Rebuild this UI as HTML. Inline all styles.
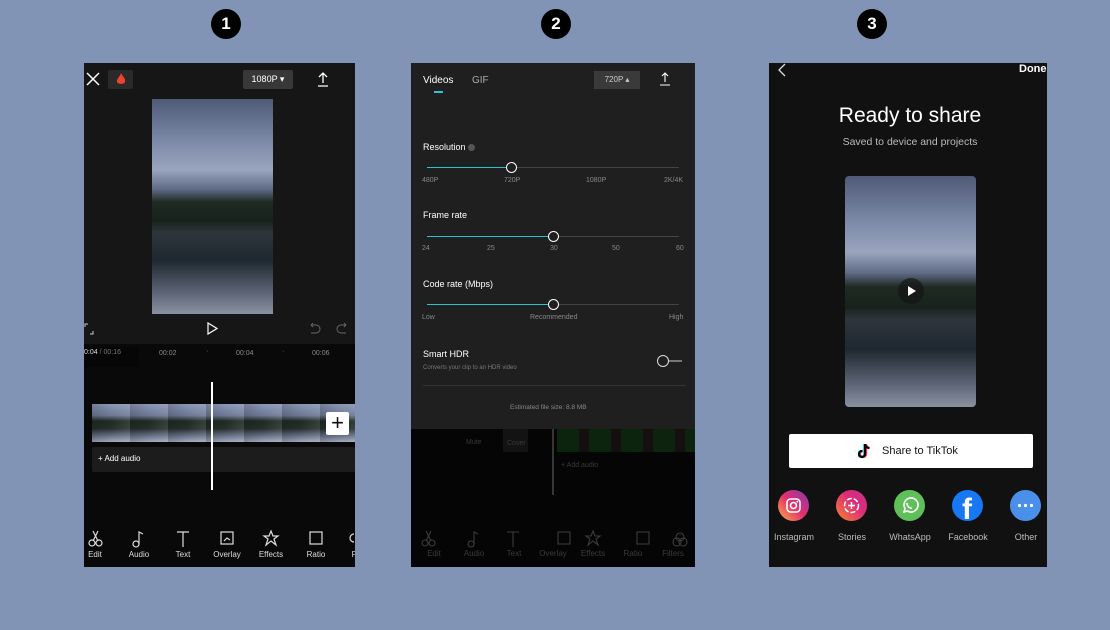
<!DOCTYPE html>
<html><head><meta charset="utf-8"><style>
*{margin:0;padding:0;box-sizing:border-box}
body{width:1110px;height:630px;background:#8194b6;position:relative;overflow:hidden;font-family:"Liberation Sans",sans-serif}
.a{position:absolute}
.num{position:absolute;width:30px;height:30px;border-radius:50%;background:#000;color:#fff;font-weight:bold;font-size:17px;text-align:center;line-height:30px;top:9px}
.photo{background:linear-gradient(180deg,#4e5a76 0%,#7d8aa8 20%,#9aa4bd 33%,#5f6a85 42%,#1e2a22 48%,#18221d 57%,#2e353d 62%,#1e2830 75%,#5d6475 90%,#8a92a2 100%)}
.t{position:absolute;color:#fff;white-space:nowrap}
.sl{position:absolute;height:1px;background:#444}
.sl i{position:absolute;left:0;top:0;height:1px;background:#2bc3d3}
.knob{position:absolute;width:11px;height:11px;border-radius:50%;border:1.5px solid #fff;background:#1f1f1f;top:-5px}
.lab{position:absolute;font-size:7px;color:#888}
.tb{position:absolute;font-size:8px;color:#ddd;text-align:center;width:40px}
.soc{position:absolute;width:31px;height:31px;border-radius:50%;top:490px}
.sl2{position:absolute;top:532px;font-size:9px;color:#bbb;width:60px;text-align:center}
</style></head><body>
<div class="num" style="left:211px">1</div>
<div class="num" style="left:541px">2</div>
<div class="num" style="left:857px">3</div>

<div class="a" style="left:84px;top:63px;width:271px;height:504px;background:#161616;overflow:hidden">
 <div class="a" style="left:0;top:281px;width:271px;height:223px;background:#090909"></div>
 <svg class="a" style="left:2px;top:9px" width="14" height="14"><path d="M1 1L13 13M13 1L1 13" stroke="#fff" stroke-width="1.5"/></svg>
 <div class="a" style="left:24px;top:7px;width:25px;height:19px;background:#2a2a2a;border-radius:2px"></div>
 <svg class="a" style="left:31px;top:9px" width="12" height="14"><path d="M6 1C7 4 11 6 10 10C9.5 12.5 2.5 12.5 2 10C1.5 7 4 6 6 1Z" fill="#e8452c"/></svg>
 <div class="a" style="left:159px;top:7px;width:50px;height:19px;background:#383838;border-radius:2px;color:#fff;font-size:9px;line-height:19px;text-align:center">1080P ▾</div>
 <svg class="a" style="left:232px;top:8px" width="14" height="16"><path d="M7 12V2M3 6L7 2L11 6M2 15H12" stroke="#fff" stroke-width="1.3" fill="none"/></svg>
 <div class="a photo" style="left:68px;top:36px;width:121px;height:215px"></div>
 <svg class="a" style="left:0;top:260px" width="10" height="12"><path d="M1 4V1H4M9 8V11H6" stroke="#ccc" fill="none"/></svg>
 <svg class="a" style="left:123px;top:259px" width="11" height="13"><path d="M1 1L10 6.5L1 12Z" stroke="#fff" fill="none" stroke-width="1.2"/></svg>
 <svg class="a" style="left:225px;top:260px" width="40" height="12"><path d="M2 2H7A4 4 0 0 1 7 10H2M2 2L4 0M2 2L4 4" stroke="#666" fill="none"/><path d="M37 2H32A4 4 0 0 0 32 10H37M37 2L35 0M37 2L35 4" stroke="#666" fill="none"/></svg>
 <div class="a" style="left:0;top:284px;width:55px;height:20px;background:#060606"></div>
 <div class="t" style="left:0;top:286px;font-size:7px;color:#ddd">0:04 <span style="color:#777">/ 00:16</span></div>
 <div class="t" style="left:75px;top:287px;font-size:7px;color:#888">00:02</div>
 <div class="t" style="left:122px;top:285px;font-size:7px;color:#888">·</div>
 <div class="t" style="left:152px;top:287px;font-size:7px;color:#888">00:04</div>
 <div class="t" style="left:198px;top:285px;font-size:7px;color:#888">·</div>
 <div class="t" style="left:228px;top:287px;font-size:7px;color:#888">00:06</div>
 <div class="a" style="left:8px;top:341px;width:263px;height:38px;background:linear-gradient(180deg,#8a96b4 0%,#6d7894 30%,#1e2a22 45%,#26302a 65%,#5a6478 80%,#a0a8bc 100%)"></div>
 <div class="a" style="left:8px;top:341px;width:263px;height:38px;background:repeating-linear-gradient(90deg,rgba(0,0,0,.15) 0,rgba(0,0,0,0) 19px,rgba(255,255,255,.1) 38px)"></div>
 <div class="a" style="left:242px;top:349px;width:23px;height:23px;background:#fff;border-radius:2px;font-size:22px;line-height:22px;text-align:center;color:#111">+</div>
 <div class="a" style="left:8px;top:384px;width:263px;height:25px;background:#1c1c1c;border-radius:2px"></div>
 <div class="t" style="left:14px;top:391px;font-size:8px">+ Add audio</div>
 <div class="a" style="left:127px;top:319px;width:2px;height:108px;background:#fff"></div>
 <svg class="a" style="left:0;top:466px" width="271" height="20" fill="none" stroke="#ddd" stroke-width="1.2">
  <circle cx="8" cy="14" r="3"/><circle cx="15" cy="14" r="3"/><path d="M9 12L14 2M14 12L9 2"/>
  <circle cx="52" cy="15" r="3"/><path d="M55 15V3L59 5"/>
  <path d="M93 3H105M99 3V18"/>
  <rect x="137" y="3" width="12" height="12"/><path d="M140 12L143 9L146 11"/>
  <path d="M187 2L189 7L194 7L190 10L192 16L187 12L182 16L184 10L180 7L185 7Z"/>
  <rect x="226" y="3" width="12" height="12"/>
  <path d="M270 5A4 4 0 0 0 270 13"/>
 </svg>
 <div class="tb" style="left:-9px;top:487px">Edit</div>
 <div class="tb" style="left:35px;top:487px">Audio</div>
 <div class="tb" style="left:79px;top:487px">Text</div>
 <div class="tb" style="left:123px;top:487px">Overlay</div>
 <div class="tb" style="left:167px;top:487px">Effects</div>
 <div class="tb" style="left:212px;top:487px">Ratio</div>
 <div class="tb" style="left:251px;top:487px">Fi</div>
</div>

<div class="a" style="left:411px;top:63px;width:284px;height:504px;background:#050505;overflow:hidden">
 <div class="a" style="left:0;top:366px;width:284px;height:138px;opacity:.3">
  <div class="t" style="left:55px;top:10px;font-size:7px;color:#aaa">Mute</div>
  <div class="a" style="left:92px;top:0;width:25px;height:23px;background:#333"></div>
  <div class="t" style="left:96px;top:11px;font-size:7px;color:#aaa">Cover</div>
  <div class="a" style="left:141px;top:0;width:2px;height:66px;background:#aaa"></div>
  <div class="a" style="left:146px;top:0;width:138px;height:23px;background:repeating-linear-gradient(90deg,#1f6a24 0,#1f6a24 22px,#3a2a20 22px,#3a2a20 32px)"></div>
  <div class="t" style="left:150px;top:33px;font-size:7px;color:#aaa">+ Add audio</div>
 </div>
 <div class="a" style="left:0;top:0;width:284px;height:366px;background:#1f1f1f"></div>
 <div class="t" style="left:12px;top:12px;font-size:10px">Videos</div>
 <div class="a" style="left:23px;top:28px;width:9px;height:2px;background:#2bc3d3"></div>
 <div class="t" style="left:61px;top:12px;font-size:10px;color:#aaa">GIF</div>
 <div class="a" style="left:183px;top:8px;width:46px;height:18px;background:#3a3a3a;color:#ccc;font-size:8px;line-height:18px;text-align:center">720P ▴</div>
 <svg class="a" style="left:248px;top:9px" width="12" height="14"><path d="M6 10V1M3 4L6 1L9 4M1 13H11" stroke="#fff" stroke-width="1.1" fill="none"/></svg>
 <div class="t" style="left:12px;top:79px;font-size:9px">Resolution <span style="display:inline-block;width:7px;height:7px;border-radius:50%;background:#555;vertical-align:middle"></span></div>
 <div class="sl" style="left:16px;top:104px;width:252px"><i style="width:84px"></i><div class="knob" style="left:79px"></div></div>
 <div class="lab" style="left:11px;top:114px">480P</div><div class="lab" style="left:93px;top:114px">720P</div><div class="lab" style="left:175px;top:114px">1080P</div><div class="lab" style="left:253px;top:114px">2K/4K</div>
 <div class="t" style="left:12px;top:147px;font-size:9px">Frame rate</div>
 <div class="sl" style="left:16px;top:173px;width:252px"><i style="width:126px"></i><div class="knob" style="left:121px"></div></div>
 <div class="lab" style="left:11px;top:182px">24</div><div class="lab" style="left:76px;top:182px">25</div><div class="lab" style="left:139px;top:182px">30</div><div class="lab" style="left:201px;top:182px">50</div><div class="lab" style="left:265px;top:182px">60</div>
 <div class="t" style="left:12px;top:216px;font-size:9px">Code rate (Mbps)</div>
 <div class="sl" style="left:16px;top:241px;width:252px"><i style="width:126px"></i><div class="knob" style="left:121px"></div></div>
 <div class="lab" style="left:11px;top:251px">Low</div><div class="lab" style="left:119px;top:251px">Recommended</div><div class="lab" style="left:258px;top:251px">High</div>
 <div class="t" style="left:12px;top:286px;font-size:9px">Smart HDR</div>
 <div class="t" style="left:12px;top:302px;font-size:6px;color:#777">Converts your clip to an HDR video</div>
 <div class="a" style="left:255px;top:297px;width:16px;height:2px;background:#777"></div>
 <div class="a" style="left:246px;top:292px;width:12px;height:12px;border-radius:50%;border:1.5px solid #ddd;background:#1f1f1f"></div>
 <div class="a" style="left:12px;top:322px;width:263px;height:1px;background:#333"></div>
 <div class="t" style="left:99px;top:341px;font-size:6.5px;color:#888">Estimated file size: 8.8 MB</div>
 <svg class="a" style="left:10px;top:466px;opacity:.25" width="270" height="20" fill="none" stroke="#ddd" stroke-width="1.1">
  <circle cx="4" cy="14" r="3"/><circle cx="11" cy="14" r="3"/><path d="M5 12L10 2M10 12L5 2"/>
  <circle cx="50" cy="15" r="3"/><path d="M53 15V3L57 5"/>
  <path d="M86 3H98M92 3V18"/><rect x="137" y="3" width="12" height="12"/>
  <path d="M172 2L174 7L179 7L175 10L177 16L172 12L167 16L169 10L165 7L170 7Z"/>
  <rect x="216" y="3" width="12" height="12"/><circle cx="259" cy="8" r="4"/><circle cx="256" cy="13" r="4"/><circle cx="262" cy="13" r="4"/>
 </svg>
 <div class="tb" style="left:3px;top:486px;color:#3a3a3a">Edit</div><div class="tb" style="left:43px;top:486px;color:#3a3a3a">Audio</div><div class="tb" style="left:83px;top:486px;color:#3a3a3a">Text</div><div class="tb" style="left:122px;top:486px;color:#3a3a3a">Overlay</div><div class="tb" style="left:162px;top:486px;color:#3a3a3a">Effects</div><div class="tb" style="left:202px;top:486px;color:#3a3a3a">Ratio</div><div class="tb" style="left:242px;top:486px;color:#3a3a3a">Filters</div>
</div>

<div class="a" style="left:769px;top:63px;width:278px;height:504px;background:#111;overflow:hidden">
 <svg class="a" style="left:8px;top:0" width="10" height="14"><path d="M8 1L2 7L8 13" stroke="#ddd" stroke-width="1.3" fill="none"/></svg>
 <div class="t" style="left:250px;top:0;font-size:11px;font-weight:bold">Done</div>
 <div class="t" style="left:0;width:282px;text-align:center;top:41px;font-size:21px">Ready to share</div>
 <div class="t" style="left:0;width:282px;text-align:center;top:73px;font-size:10.5px;color:#bbb">Saved to device and projects</div>
 <div class="a photo" style="left:76px;top:113px;width:131px;height:231px;border-radius:4px"></div>
 <div class="a" style="left:129px;top:215px;width:26px;height:26px;border-radius:50%;background:rgba(20,20,20,.7)"></div>
 <svg class="a" style="left:138px;top:222px" width="10" height="12"><path d="M1 1L9 6L1 11Z" fill="#fff"/></svg>
 <div class="a" style="left:20px;top:371px;width:244px;height:34px;background:#fff;border-radius:2px"></div>
 <svg class="a" style="left:89px;top:380px" width="14" height="16"><path d="M7 1V11A3 3 0 1 1 4 8M7 1C7 3 9 5 11 5" stroke="#25f4ee" stroke-width="2.2" fill="none" transform="translate(-1,0)"/><path d="M7 1V11A3 3 0 1 1 4 8M7 1C7 3 9 5 11 5" stroke="#fe2c55" stroke-width="2.2" fill="none" transform="translate(1,0)"/><path d="M7 1V11A3 3 0 1 1 4 8M7 1C7 3 9 5 11 5" stroke="#000" stroke-width="2.2" fill="none"/></svg>
 <div class="t" style="left:113px;top:382px;font-size:11px;color:#111">Share to TikTok</div>
</div>
<div class="soc" style="left:778px;background:linear-gradient(45deg,#fcaf45,#e1306c 50%,#833ab4)"><svg width="31" height="31"><rect x="9" y="9" width="13" height="13" rx="3.5" stroke="#fff" stroke-width="1.6" fill="none"/><circle cx="15.5" cy="15.5" r="3" stroke="#fff" stroke-width="1.6" fill="none"/><circle cx="19.3" cy="11.7" r=".9" fill="#fff"/></svg></div>
<div class="soc" style="left:836px;background:linear-gradient(45deg,#f58529,#dd2a7b 60%,#c13584)"><svg width="31" height="31"><circle cx="15.5" cy="15.5" r="7" stroke="#fff" stroke-width="1.5" fill="none" stroke-dasharray="5 2"/><path d="M15.5 12V19M12 15.5H19" stroke="#fff" stroke-width="1.5"/></svg></div>
<div class="soc" style="left:894px;background:#5fc05a"><svg width="31" height="31"><path d="M10 22L11 18.5A7 7 0 1 1 13.5 21Z" stroke="#fff" stroke-width="1.6" fill="none"/><path d="M13 13C13 16 15 18 18 18.5" stroke="#fff" stroke-width="1.6" fill="none"/></svg></div>
<div class="soc" style="left:952px;background:#1877f2;overflow:hidden"><div class="t" style="left:10px;top:3px;font-size:30px;font-weight:bold">f</div></div>
<div class="soc" style="left:1010px;background:#4a8fe9"><svg width="31" height="31"><circle cx="9.5" cy="15.5" r="1.6" fill="#fff"/><circle cx="15.5" cy="15.5" r="1.6" fill="#fff"/><circle cx="21.5" cy="15.5" r="1.6" fill="#fff"/></svg></div>
<div class="sl2" style="left:764px">Instagram</div>
<div class="sl2" style="left:822px">Stories</div>
<div class="sl2" style="left:880px">WhatsApp</div>
<div class="sl2" style="left:938px">Facebook</div>
<div class="sl2" style="left:996px">Other</div>
</body></html>
